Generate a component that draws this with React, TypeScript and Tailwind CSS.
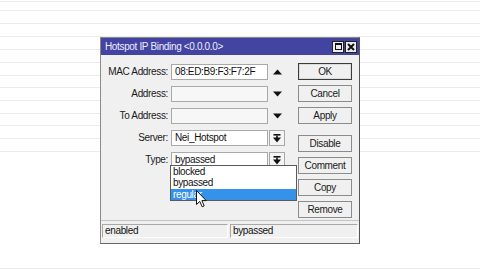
import React from "react";

const lineRows = [
  "h-[2px]",
  "h-[9px]",
  "h-[13px]",
  "h-[13px]",
  "h-[13px]",
  "h-[13px]",
  "h-[13px]",
  "h-[12px]",
  "h-[13px]",
  "h-[13px]",
  "h-[12px]",
  "h-[13px]",
  "h-[13px]",
];

function UpArrow() {
  return (
    <svg width="9" height="6" viewBox="0 0 9 6">
      <polygon points="0,5.5 9,5.5 4.5,0.5" fill="#111" />
    </svg>
  );
}
function DownArrow() {
  return (
    <svg width="9" height="6" viewBox="0 0 9 6">
      <polygon points="0,0.5 9,0.5 4.5,5.5" fill="#111" />
    </svg>
  );
}
function DropBtn() {
  return (
    <div className="w-[16px] h-[16px] border border-[#a8a8a8] bg-[#f4f4f4] flex items-center justify-center">
      <svg width="8" height="9" viewBox="0 0 8 9">
        <rect x="0.5" y="0" width="7" height="1.6" fill="#111" />
        <rect x="3.2" y="1.6" width="1.6" height="2.4" fill="#111" />
        <polygon points="0,3.6 8,3.6 4,8.4" fill="#111" />
      </svg>
    </div>
  );
}

function Row({
  label,
  value,
  extra,
  inputClass,
}: {
  label: string;
  value?: string;
  extra: React.ReactNode;
  inputClass?: string;
}) {
  return (
    <div className="flex items-center h-[16px]">
      <div className="w-[67px] text-right text-[#1a1a1a] leading-none">{label}</div>
      <div
        className={
          "ml-[3px] w-[97px] h-[16px] border border-[#a9a9a9] flex items-center pl-[3px] leading-none text-[#111] " +
          (inputClass ?? "bg-white")
        }
      >
        {value}
      </div>
      <div className="ml-[1px] w-[16px] h-[16px] flex items-center justify-center">{extra}</div>
    </div>
  );
}

function Btn({ label, strong, className }: { label: string; strong?: boolean; className?: string }) {
  return (
    <div
      className={
        "w-[54px] h-[17px] flex items-center justify-center leading-none text-[#1a1a1a] bg-[#f0f0f0] " +
        (strong ? "border border-[#3c3c3c] shadow-[inset_0_0_0_1px_#dcdcdc]" : "border border-[#8c8c8c]") +
        " " +
        (className ?? "")
      }
    >
      {label}
    </div>
  );
}

export default function App() {
  return (
    <div
      className="relative w-[480px] h-[270px] bg-white overflow-hidden text-[10px] tracking-[-0.35px]"
      style={{ fontFamily: '"Liberation Sans", Arial, sans-serif' }}
    >
      {/* faint background grid lines */}
      <div className="flex flex-col h-full">
        {lineRows.map((c, i) => (
          <div key={i} className={c + " border-b border-[#ebebeb]"} />
        ))}
        <div className="flex-1 border-b border-[#ededed]" />
        <div className="h-[1px]" />
      </div>

      {/* dialog window */}
      <div className="absolute left-[100px] top-[37px] w-[260px] h-[207px] bg-[#f0f0f0] border border-[#8a8a8a] border-r-[#555] border-b-[#666] flex flex-col">
        {/* title bar */}
        <div className="h-[17px] bg-[#4343a2] flex items-center justify-between pl-[4px] pr-[2px]">
          <span className="text-[#eeeeff] leading-none">Hotspot IP Binding &lt;0.0.0.0&gt;</span>
          <div className="flex gap-[1px]">
            <div className="w-[12px] h-[12px] bg-[#ececec] border border-[#222] flex items-center justify-center">
              <div className="w-[7px] h-[7px] border border-[#111] border-t-2" />
            </div>
            <div className="w-[12px] h-[12px] bg-[#ececec] border border-[#222] flex items-center justify-center">
              <svg width="8" height="8" viewBox="0 0 8 8">
                <path d="M1 1 L7 7 M7 1 L1 7" stroke="#111" strokeWidth="2" />
              </svg>
            </div>
          </div>
        </div>

        {/* body */}
        <div className="flex-1 flex justify-between pr-[7px]">
          <div className="flex flex-col gap-[6px] pt-[9px]">
            <Row label="MAC Address:" value="08:ED:B9:F3:F7:2F" extra={<UpArrow />} />
            <Row label="Address:" extra={<DownArrow />} inputClass="bg-[#f7f7f7]" />
            <Row label="To Address:" extra={<DownArrow />} inputClass="bg-[#f7f7f7]" />
            <Row label="Server:" value="Nei_Hotspot" extra={<DropBtn />} />
            <Row label="Type:" value="bypassed" extra={<DropBtn />} />
          </div>
          <div className="flex flex-col gap-[5px] pt-[8px]">
            <Btn label="OK" strong />
            <Btn label="Cancel" />
            <Btn label="Apply" />
            <Btn label="Disable" className="mt-[6px]" />
            <Btn label="Comment" />
            <Btn label="Copy" />
            <Btn label="Remove" />
          </div>
        </div>

        {/* status bar */}
        <div className="h-[23px] border-t border-[#c4c4c4] flex gap-[2px] px-[1px] pt-[3px] pb-[5px]">
          <div className="w-[126px] border border-[#a8a8a8] border-b-white border-r-white flex items-center pl-[2px] leading-none text-[#111]">
            enabled
          </div>
          <div className="flex-1 border border-[#a8a8a8] border-b-white border-r-white flex items-center pl-[2px] leading-none text-[#111]">
            bypassed
          </div>
        </div>
      </div>

      {/* open dropdown list */}
      <div className="absolute left-[170px] top-[165px] w-[127px] h-[36px] bg-white border border-[#5a5a5a] flex flex-col leading-none text-[#111]">
        <div className="h-[11px] flex items-center pl-[2px]">blocked</div>
        <div className="h-[12px] flex items-center pl-[2px]">bypassed</div>
        <div className="h-[11px] flex items-center pl-[2px] bg-[#3592ea] text-white">regular</div>
      </div>

      {/* mouse cursor */}
      <svg className="absolute left-[196px] top-[190px]" width="11" height="18" viewBox="0 0 11 18">
        <path
          d="M0.5 0.5 L0.5 14.5 L3.8 11.4 L6.2 16.8 L8.2 15.9 L5.9 10.6 L10.2 10.6 Z"
          fill="white"
          stroke="#111"
          strokeWidth="1"
          strokeLinejoin="round"
        />
      </svg>
    </div>
  );
}
